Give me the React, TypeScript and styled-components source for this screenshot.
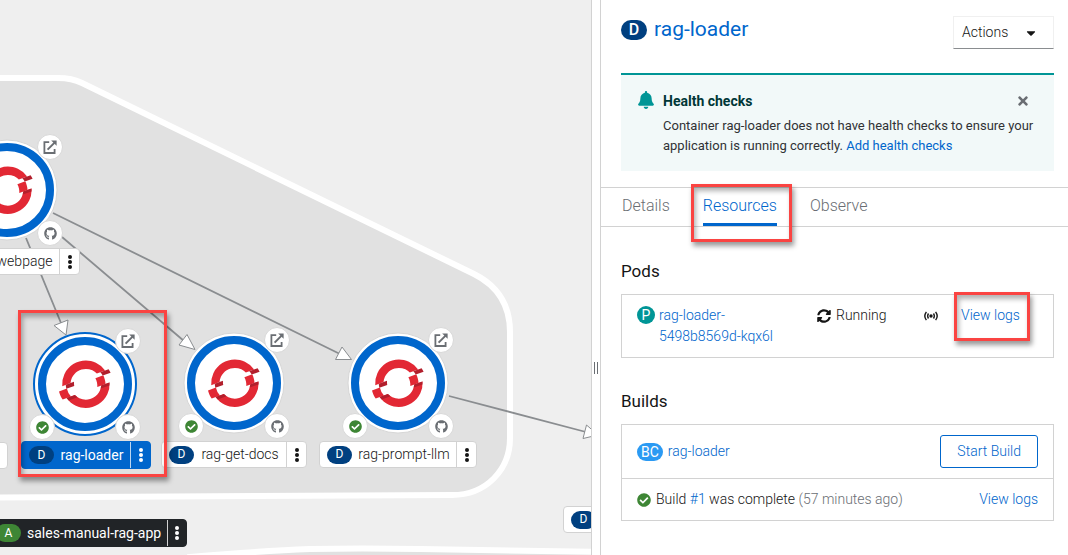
import React from "react";
import styled, { createGlobalStyle, css } from "styled-components";
import { FaBell, FaCaretDown, FaCheckCircle, FaGithub, FaSyncAlt, FaTimes } from "react-icons/fa";

const blue = "#0066cc";
const line = "#d2d2d2";

const GlobalStyle = createGlobalStyle`
  *, *::before, *::after { box-sizing: border-box; }
  body {
    margin: 0;
    color: #151515;
    background: #fff;
    font-family: Roboto, "Liberation Sans", sans-serif;
    font-size: 14px;
    font-weight: 300;
    line-height: 21px;
  }
  h1, h2, h3, p { margin: 0; font-weight: 400; }
  button { font: inherit; color: inherit; cursor: pointer; }
  a { color: ${blue}; text-decoration: none; }
`;

const callout = css`
  border: 3px solid #fa4442;
  box-shadow: 2px 4px 5px rgba(0, 0, 0, 0.4), inset 2px 4px 5px rgba(0, 0, 0, 0.3);
  pointer-events: none;
`;

const Page = styled.div`
  display: grid;
  grid-template-columns: minmax(0, 591fr) 10px minmax(0, 467fr);
  min-height: 100vh;
`;

/* ---------- Topology canvas ---------- */

const Canvas = styled.main`
  position: relative;
  overflow: hidden;
  background: #efefef;
`;

const Graph = styled.svg`
  position: absolute;
  top: 0;
  left: 0;
  overflow: visible;
`;

const NodeBox = styled.div<{ $x: number; $y: number }>`
  position: absolute;
  left: ${(p) => p.$x - 53}px;
  top: ${(p) => p.$y - 53}px;
  width: 106px;
  height: 106px;
`;

const Decorator = styled.button<{ $x: number; $y: number }>`
  position: absolute;
  left: ${(p) => p.$x + 40}px;
  top: ${(p) => p.$y + 40}px;
  width: 26px;
  height: 26px;
  padding: 0;
  display: grid;
  place-items: center;
  border: 1px solid #d8d8d8;
  border-radius: 50%;
  background: #fff;
  color: #6a6e73;
`;

const tones = {
  plain: { background: "#fff", color: "#151515", rule: "#d2d2d2" },
  selected: { background: "#0066cc", color: "#fff", rule: "#bcd6f0" },
  dark: { background: "#212427", color: "#fff", rule: "#d2d2d2" },
};
type Tone = keyof typeof tones;

const Label = styled.div<{ $x: number; $y: number; $width: number; $tone: Tone }>`
  position: absolute;
  left: ${(p) => p.$x}px;
  top: ${(p) => p.$y}px;
  width: ${(p) => p.$width}px;
  height: ${(p) => (p.$tone === "plain" ? 27 : 28)}px;
  display: flex;
  align-items: center;
  padding-left: 7px;
  gap: 6px;
  border: 1px solid ${(p) => (p.$tone === "plain" ? "#d2d2d2" : tones[p.$tone].background)};
  border-radius: 4px;
  background: ${(p) => tones[p.$tone].background};
  color: ${(p) => tones[p.$tone].color};
  font-weight: ${(p) => (p.$tone === "plain" ? 300 : 400)};
  white-space: nowrap;
`;

const LabelText = styled.span`
  flex: 1;
  text-align: center;
`;

const Kebab = styled.button<{ $tone: Tone }>`
  align-self: stretch;
  width: 20px;
  padding: 0;
  display: grid;
  place-items: center;
  border: 0;
  border-left: 1px solid ${(p) => tones[p.$tone].rule};
  background: none;
`;

const Pill = styled.span<{ $color: string; $large?: boolean }>`
  flex: none;
  display: inline-flex;
  align-items: center;
  justify-content: center;
  min-width: ${(p) => (p.$large ? 26 : 25)}px;
  height: ${(p) => (p.$large ? 20 : 18)}px;
  border-radius: 10px;
  background: ${(p) => p.$color};
  color: #fff;
  font-size: ${(p) => (p.$large ? 16 : 12)}px;
  font-weight: ${(p) => (p.$large ? 500 : 400)};
`;

const NodeCallout = styled.div`
  ${callout}
  position: absolute;
  left: 18px;
  top: 310px;
  width: 149px;
  height: 167px;
`;

const Dots = () => (
  <svg width="6" height="16" viewBox="0 0 6 16" fill="currentColor" aria-hidden="true">
    <circle cx="3" cy="3" r="2" />
    <circle cx="3" cy="8" r="2" />
    <circle cx="3" cy="13" r="2" />
  </svg>
);

const OpenIcon = () => (
  <svg width="14" height="14" viewBox="0 0 14 14" fill="none" stroke="currentColor" strokeWidth="1.8" aria-hidden="true">
    <path d="M6.2 2.200H1.400v10.800h10.200V9" />
    <path d="M4.600 9.600 11.600 2.600" strokeWidth="2" />
    <path d="M8.200.4h5.400v5.400z" fill="currentColor" stroke="none" />
  </svg>
);

const OpenShiftLogo = () => (
  <g transform="translate(27 27.5) scale(0.86)">
    <path fill="#e22834" d="M38.802 13.776c2.004.935 3.74 2.21 5.204 3.707l9.633-3.506a27.38 27.38 0 0 0-10.756-8.95c-13.77-6.42-30.198-.442-36.62 13.326a27.38 27.38 0 0 0-2.488 13.771l9.634-3.505c.16-2.087.67-4.18 1.603-6.184 4.173-8.947 14.844-12.83 23.79-8.658" />
    <path fill="#e22834" d="M49.074 31.38a17.64 17.64 0 0 1-1.616 6.186c-4.173 8.947-14.843 12.83-23.79 8.657a17.71 17.71 0 0 1-5.215-3.7l-9.612 3.5c2.662 3.744 6.293 6.874 10.748 8.953 13.77 6.42 30.196.44 36.618-13.328a27.28 27.28 0 0 0 2.479-13.765z" />
    <path fill="#e22834" d="M9.153 35.01 0 38.342c.84 3.337 2.3 6.508 4.304 9.33l9.612-3.5a17.99 17.99 0 0 1-4.763-9.164" />
    <path fill="#e22834" d="m51.445 19.618-9.153 3.332c1.7 3.046 2.503 6.553 2.24 10.08l9.612-3.497c-.275-3.45-1.195-6.817-2.7-9.915" />
    <path fill="#b21f2c" d="M17.424 27.158 7.8 30.664c.123 1.545.4 3.07.764 4.566l9.15-3.333c-.297-1.547-.403-3.142-.28-4.74M60 16.504c-.672-1.386-1.45-2.726-2.35-3.988l-9.632 3.506c1.12 1.147 2.06 2.435 2.83 3.813z" />
    <path fill="#b21f2c" d="m8.84 46.02 9.61-3.5 3 2.400-10.100 3.900zM49.07 31.38l9.61-3.5v3.400l-10.200 3.700z" />
  </g>
);

type NodeProps = { name: string; x: number; y: number; selected?: boolean; built?: boolean };

const WorkloadNode = ({ name, x, y, selected, built }: NodeProps) => (
  <NodeBox $x={x} $y={y}>
    <svg width="106" height="106" viewBox="0 0 106 106" role="img" aria-label={name}>
      {selected ? (
        <circle cx="53" cy="53" r="51" fill="#fff" stroke={blue} strokeWidth="2" />
      ) : (
        <circle cx="53" cy="53" r="50" fill="#fff" stroke="#d6d6d6" strokeWidth="1" />
      )}
      <circle cx="53" cy="53" r="43" fill="#fff" stroke={blue} strokeWidth="8" />
      <OpenShiftLogo />
    </svg>
    <Decorator $x={43} $y={-43} aria-label="Open URL"><OpenIcon /></Decorator>
    <Decorator $x={43} $y={43} aria-label="Edit source code"><FaGithub size={13} /></Decorator>
    {built && (
      <Decorator $x={-43} $y={43} aria-label="Build complete"><FaCheckCircle size={13} color="#3e8635" /></Decorator>
    )}
  </NodeBox>
);

type LabelProps = { badge?: string; text?: string; x: number; y: number; width: number; tone?: Tone };

const NodeLabel = ({ badge, text, x, y, width, tone = "plain" }: LabelProps) => (
  <Label $x={x} $y={y} $width={width} $tone={tone}>
    {badge && <Pill $color={badge === "A" ? "#3e8635" : "#004080"}>{badge}</Pill>}
    <LabelText>{text}</LabelText>
    <Kebab $tone={tone} aria-label="Actions"><Dots /></Kebab>
  </Label>
);

const Topology = () => (
  <Canvas>
    <Graph width="592" height="555" viewBox="0 0 592 555" aria-hidden="true">
      <g fill="#e1e1e1" stroke="#fff" strokeWidth="6">
        <path d="M-10 78H58Q72 78 82 83L474 274Q510 292 510 332V438C510 470 486 495 452 495L-10 497.500Z" />
        <path d="M190 557Q260 551 310 549Q360 548 420 549L600 552V580H190Z" />
      </g>
      <g stroke="#8a8d90" strokeWidth="1.8" fill="#fff">
        <path d="M26 238 61 323M62 237 184 341M53 213 340 354M449 396 586 432" />
        <path strokeWidth="1" d="M54 325.500 68 320 66 335ZM187 334.500 179 345 195 349.500ZM342 347 335.500 359.500 351.500 359.500ZM586.500 425 583 438.500 598 435Z" />
      </g>
    </Graph>
    <WorkloadNode name="webpage" x={7} y={190} />
    <WorkloadNode name="rag-loader" x={85} y={384} selected built />
    <WorkloadNode name="rag-get-docs" x={234} y={383} built />
    <WorkloadNode name="rag-prompt-llm" x={398} y={383} built />
    <NodeLabel text="webpage" x={-12} y={248} width={92} />
    <NodeLabel x={-90} y={442} width={98} />
    <NodeLabel badge="D" text="rag-get-docs" x={161} y={441} width={146} />
    <NodeLabel badge="D" text="rag-prompt-llm" x={319} y={441} width={158} />
    <NodeLabel badge="D" text="rag-loader" x={21} y={441} width={130} tone="selected" />
    <NodeLabel badge="A" text="sales-manual-rag-app" x={-12} y={519} width={199} tone="dark" />
    <NodeLabel badge="D" x={563} y={506} width={120} />
    <NodeCallout />
  </Canvas>
);

/* ---------- Splitter ---------- */

const Splitter = styled.div`
  position: sticky;
  top: 0;
  height: 100vh;
  display: flex;
  align-items: center;
  justify-content: center;
  padding-top: 181px;
  border: solid ${line};
  border-width: 0 1px;
  background: #fff;
`;

const Grip = styled.span`
  width: 4px;
  height: 12px;
  border: solid #6a6e73;
  border-width: 0 1px;
`;

/* ---------- Details panel ---------- */

const Panel = styled.aside`
  background: #fff;
`;

const Header = styled.header`
  display: flex;
  justify-content: space-between;
  padding: 16px 14px 0 20px;
`;

const Title = styled.h1`
  display: flex;
  align-items: center;
  gap: 7px;
  height: 27px;
  font-size: 21px;
`;

const ActionsButton = styled.button`
  display: flex;
  align-items: center;
  justify-content: space-between;
  width: 101px;
  height: 33px;
  padding: 0 15px 0 8px;
  border: 1px solid #f0f0f0;
  border-bottom-color: #8a8d90;
  background: #fff;
`;

const Alert = styled.section`
  display: grid;
  grid-template-columns: 26px minmax(0, 1fr);
  margin: 24px 14px 16px 20px;
  padding: 16px 16px 15px;
  border-top: 2px solid #009596;
  background: #f2f9f9;
  color: #303235;
  font-size: 13px;
  line-height: 20px;
`;

const AlertTitle = styled.h2`
  display: flex;
  align-items: center;
  justify-content: space-between;
  height: 19px;
  padding-right: 8px;
  margin-bottom: 6px;
  color: #003737;
  font-size: 14px;
  font-weight: 700;
`;

const CloseButton = styled.button`
  display: flex;
  padding: 0;
  border: 0;
  background: none;
  color: #6a6e73;
`;

const Tabs = styled.nav`
  display: flex;
  gap: 33px;
  height: 40px;
  margin-bottom: 1px;
  padding-left: 21px;
  border: solid ${line};
  border-width: 1px 0;
`;

const Tab = styled.a<{ $active?: boolean }>`
  position: relative;
  height: 38px;
  color: ${(p) => (p.$active ? blue : "#6a6e73")};
  font-size: 16px;
  line-height: 36px;
  border-bottom: 3px solid ${(p) => (p.$active ? blue : "transparent")};
`;

const TabCallout = styled.span`
  ${callout}
  position: absolute;
  inset: -4px -15px -19px -12px;
`;

const Section = styled.section`
  padding: 31px 14px 0 20px;
`;

const SectionTitle = styled.h2`
  height: 24px;
  margin-bottom: 11px;
  font-size: 17px;
  line-height: 24px;
`;

const List = styled.div`
  border: 1px solid ${line};
`;

const PodRow = styled.div`
  display: grid;
  grid-template-columns: minmax(0, 180fr) minmax(0, 107fr) minmax(0, 114fr);
  padding: 10px 15px;
`;

const BuildRow = styled.div`
  display: flex;
  align-items: center;
  justify-content: space-between;
  padding: 10px 15px;

  & + & { border-top: 1px solid ${line}; }
`;

const Inline = styled.div<{ $gap: number; $top?: boolean }>`
  display: flex;
  align-items: ${(p) => (p.$top ? "flex-start" : "center")};
  align-self: ${(p) => (p.$top ? "start" : "auto")};
  gap: ${(p) => p.$gap}px;
`;

const StatusLine = styled(Inline)`
  height: 21px;
`;

const ResourceBadge = styled.span<{ $color: string }>`
  flex: none;
  min-width: 18px;
  height: 18px;
  margin-top: 1px;
  padding: 0 4px;
  border-radius: 9px;
  background: ${(p) => p.$color};
  color: #fff;
  font-size: 14px;
  font-weight: 400;
  line-height: 18px;
  text-align: center;
`;

const Muted = styled.span`
  color: #6a6e73;
`;

const CalledLink = styled.a`
  position: relative;
`;

const LinkCallout = styled.span`
  ${callout}
  position: absolute;
  inset: -13px -10px -15px -7px;
`;

const OutlineButton = styled.button`
  height: 33px;
  padding: 0 16px;
  border: 1px solid ${blue};
  border-radius: 3px;
  background: #fff;
  color: ${blue};
`;

const SignalIcon = () => (
  <svg width="14" height="10" viewBox="0 0 14 10" fill="none" stroke="currentColor" strokeWidth="1.4" aria-label="Receiving traffic">
    <circle cx="7" cy="5" r="1.7" fill="currentColor" stroke="none" />
    <path d="M2.400.8Q-.8 5 2.400 9.200M11.600.8Q14.800 5 11.600 9.200M4.500 2.500Q2.900 5 4.500 7.500M9.500 2.500Q11.100 5 9.500 7.500" />
  </svg>
);

const Details = () => (
  <Panel>
    <Header>
      <Title>
        <Pill $color="#004080" $large>D</Pill>
        <a href="#rag-loader">rag-loader</a>
      </Title>
      <ActionsButton>Actions <FaCaretDown size={14} /></ActionsButton>
    </Header>
    <Alert>
      <FaBell size={18} color="#009596" />
      <div>
        <AlertTitle>
          Health checks
          <CloseButton aria-label="Close"><FaTimes size={14} /></CloseButton>
        </AlertTitle>
        <p>
          Container rag-loader does not have health checks to ensure your application is running correctly.{" "}
          <a href="#health">Add health checks</a>
        </p>
      </div>
    </Alert>
    <Tabs>
      <Tab href="#details">Details</Tab>
      <Tab href="#resources" $active>Resources<TabCallout /></Tab>
      <Tab href="#observe">Observe</Tab>
    </Tabs>
    <Section>
      <SectionTitle>Pods</SectionTitle>
      <List>
        <PodRow>
          <Inline $gap={4} $top>
            <ResourceBadge $color="#009596">P</ResourceBadge>
            <a href="#pod">rag-loader-<br />5498b8569d-kqx6l</a>
          </Inline>
          <StatusLine $gap={5}><FaSyncAlt size={14} />Running</StatusLine>
          <StatusLine $gap={23}>
            <SignalIcon />
            <CalledLink href="#pod-logs">View logs<LinkCallout /></CalledLink>
          </StatusLine>
        </PodRow>
      </List>
    </Section>
    <Section>
      <SectionTitle>Builds</SectionTitle>
      <List>
        <BuildRow>
          <Inline $gap={5}>
            <ResourceBadge $color="#2b9af3">BC</ResourceBadge>
            <a href="#build-config">rag-loader</a>
          </Inline>
          <OutlineButton>Start Build</OutlineButton>
        </BuildRow>
        <BuildRow>
          <Inline $gap={5}>
            <FaCheckCircle size={14} color="#3e8635" />
            <span>
              Build <a href="#build-1">#1</a> was complete <Muted>(57 minutes ago)</Muted>
            </span>
          </Inline>
          <a href="#build-logs">View logs</a>
        </BuildRow>
      </List>
    </Section>
  </Panel>
);

export default function App() {
  return (
    <>
      <GlobalStyle />
      <Page>
        <Topology />
        <Splitter><Grip /></Splitter>
        <Details />
      </Page>
    </>
  );
}
